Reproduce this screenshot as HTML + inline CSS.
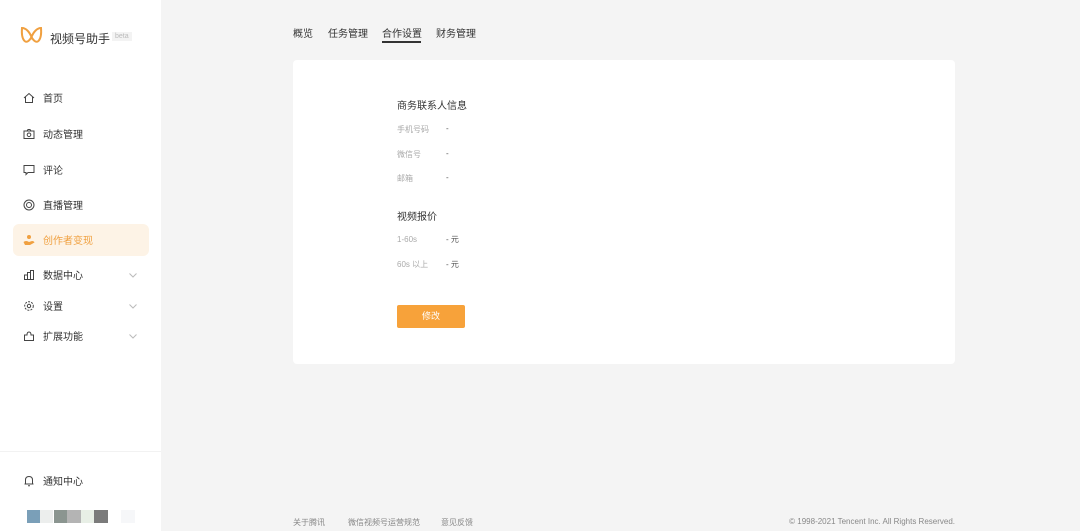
<!DOCTYPE html>
<html><head><meta charset="utf-8"><style>
*{margin:0;padding:0;box-sizing:border-box}
body{width:1080px;height:531px;overflow:hidden;background:#f4f4f4;font-family:"Liberation Sans","Noto Sans CJK SC",sans-serif;position:relative;color:#333}
.side{position:absolute;left:0;top:0;width:161px;height:531px;background:#fff}
.abs{position:absolute}
.nav{position:absolute;left:13px;width:136px;height:32px;font-size:10px;color:#333;display:flex;align-items:center;padding-left:10px;line-height:12px}
.nav svg{margin-right:8px;flex:none}
.nav span{position:relative;top:2px}
.nav.act{background:#fdf3e6;color:#f0a040;border-radius:6px}
.chev{position:absolute;left:116px;top:14px}
.tab{position:absolute;top:25px;font-size:10px;color:#333}
.card{position:absolute;left:293px;top:60px;width:662px;height:304px;background:#fff;border-radius:4px}
.lbl{position:absolute;left:397px;font-size:8px;color:#aaa}
.val{position:absolute;left:446px;font-size:8px;color:#555}
.foot{position:absolute;top:517px;font-size:8px;color:#888}
</style></head><body>
<div class="side">
  <svg class="abs" style="left:20px;top:26px" width="23" height="22" viewBox="0 0 23 22"><path d="M2 2 C1 14,6 21,11.5 11 C17 21,22 14,21 2 C17 2,13.5 6,11.5 11 C9.5 6,6 2,2 2Z" fill="none" stroke="#f0a040" stroke-width="2"/></svg>
  <div class="abs" style="left:50px;top:30px;font-size:12px;color:#333">视频号助手</div>
  <div class="abs" style="left:112px;top:32px;font-size:7px;color:#bbb;background:#f3f3f3;padding:1px 3px">beta</div>

  <div class="nav" style="top:82px"><svg width="12" height="12" viewBox="0 0 12 12"><path d="M1 6 L6 1.5 L11 6 M2.5 5 V10.5 H9.5 V5" fill="none" stroke="#444" stroke-width="1"/></svg><span>首页</span></div>
  <div class="nav" style="top:118px"><svg width="12" height="12" viewBox="0 0 12 12"><rect x="1" y="3" width="10" height="7.5" fill="none" stroke="#444"/><circle cx="6" cy="6.8" r="1.8" fill="none" stroke="#444"/><path d="M4 3 L5 1.5 H7 L8 3" fill="none" stroke="#444"/></svg><span>动态管理</span></div>
  <div class="nav" style="top:154px"><svg width="12" height="12" viewBox="0 0 12 12"><path d="M1 1.5 H11 V8.5 H5 L3 10.5 V8.5 H1Z" fill="none" stroke="#444"/></svg><span>评论</span></div>
  <div class="nav" style="top:189px"><svg width="12" height="12" viewBox="0 0 12 12"><circle cx="6" cy="6" r="5" fill="none" stroke="#444"/><circle cx="6" cy="6" r="2.5" fill="none" stroke="#444"/></svg><span>直播管理</span></div>
  <div class="nav act" style="top:224px"><svg width="12" height="12" viewBox="0 0 12 12"><circle cx="6" cy="3" r="2" fill="#f0a040"/><path d="M0.5 8 Q3 6 6 8 L9 7 Q11 7 11.5 8.5 L7 11 H2 Z" fill="#f0a040"/></svg><span>创作者变现</span></div>
  <div class="nav" style="top:259px"><svg width="12" height="12" viewBox="0 0 12 12"><path d="M1 10.5 H11 M1.5 10.5 V6 H4.5 V10.5 M4.5 10.5 V3.5 H7.5 V10.5 M7.5 10.5 V1.5 H10.5 V10.5" fill="none" stroke="#444"/></svg><span>数据中心</span><svg class="chev" width="8" height="5" viewBox="0 0 8 5"><path d="M0.5 0.5 L4 4 L7.5 0.5" fill="none" stroke="#bbb"/></svg></div>
  <div class="nav" style="top:290px"><svg width="12" height="12" viewBox="0 0 12 12"><circle cx="6" cy="6" r="4.3" fill="none" stroke="#444" stroke-dasharray="2 1.2"/><circle cx="6" cy="6" r="1.7" fill="none" stroke="#444"/></svg><span>设置</span><svg class="chev" width="8" height="5" viewBox="0 0 8 5"><path d="M0.5 0.5 L4 4 L7.5 0.5" fill="none" stroke="#bbb"/></svg></div>
  <div class="nav" style="top:320px"><svg width="12" height="12" viewBox="0 0 12 12"><path d="M1.5 5 H4 Q4 2 6 2 Q8 2 8 5 H10.5 V10.5 H1.5Z" fill="none" stroke="#444"/></svg><span>扩展功能</span><svg class="chev" width="8" height="5" viewBox="0 0 8 5"><path d="M0.5 0.5 L4 4 L7.5 0.5" fill="none" stroke="#bbb"/></svg></div>

  <div class="abs" style="left:0;top:451px;width:161px;height:1px;background:#f2f2f2"></div>
  <div class="nav" style="top:465px"><svg width="12" height="12" viewBox="0 0 12 12"><path d="M2.5 9 V5 Q2.5 1.5 6 1.5 Q9.5 1.5 9.5 5 V9 H2.5 M1.5 9 H10.5 M5 10.8 H7" fill="none" stroke="#444"/></svg><span>通知中心</span></div>
  <div class="abs" style="left:27px;top:510px;width:13px;height:13px;background:#7a9fb8"></div>
  <div class="abs" style="left:40px;top:510px;width:13px;height:13px;background:#eceeed"></div>
  <div class="abs" style="left:54px;top:510px;width:13px;height:13px;background:#8b9590"></div>
  <div class="abs" style="left:67px;top:510px;width:14px;height:13px;background:#b4b4b4"></div>
  <div class="abs" style="left:81px;top:510px;width:13px;height:13px;background:#e8efe6"></div>
  <div class="abs" style="left:94px;top:510px;width:14px;height:13px;background:#7b7b7b"></div>
  <div class="abs" style="left:121px;top:510px;width:14px;height:13px;background:#f6f7f9"></div>
</div>

<div class="tab" style="left:293px">概览</div>
<div class="tab" style="left:328px">任务管理</div>
<div class="tab" style="left:382px">合作设置</div>
<div class="abs" style="left:382px;top:41px;width:39px;height:1.5px;background:#333"></div>
<div class="tab" style="left:436px">财务管理</div>

<div class="card"></div>
<div class="abs" style="left:397px;top:97px;font-size:10px;color:#333">商务联系人信息</div>
<div class="lbl" style="top:124px">手机号码</div><div class="val" style="top:124px">-</div>
<div class="lbl" style="top:149px">微信号</div><div class="val" style="top:149px">-</div>
<div class="lbl" style="top:173px">邮箱</div><div class="val" style="top:173px">-</div>
<div class="abs" style="left:397px;top:208px;font-size:10px;color:#333">视频报价</div>
<div class="lbl" style="top:235px">1-60s</div><div class="val" style="top:234px">- 元</div>
<div class="lbl" style="top:259px">60s 以上</div><div class="val" style="top:259px">- 元</div>
<div class="abs" style="left:397px;top:305px;width:68px;height:23px;background:#f7a23a;border-radius:2px;color:#fff;font-size:9px;text-align:center;line-height:23px">修改</div>

<div class="foot" style="left:293px">关于腾讯</div>
<div class="foot" style="left:348px">微信视频号运营规范</div>
<div class="foot" style="left:441px">意见反馈</div>
<div class="foot" style="right:125px">© 1998-2021 Tencent Inc. All Rights Reserved.</div>
</body></html>
